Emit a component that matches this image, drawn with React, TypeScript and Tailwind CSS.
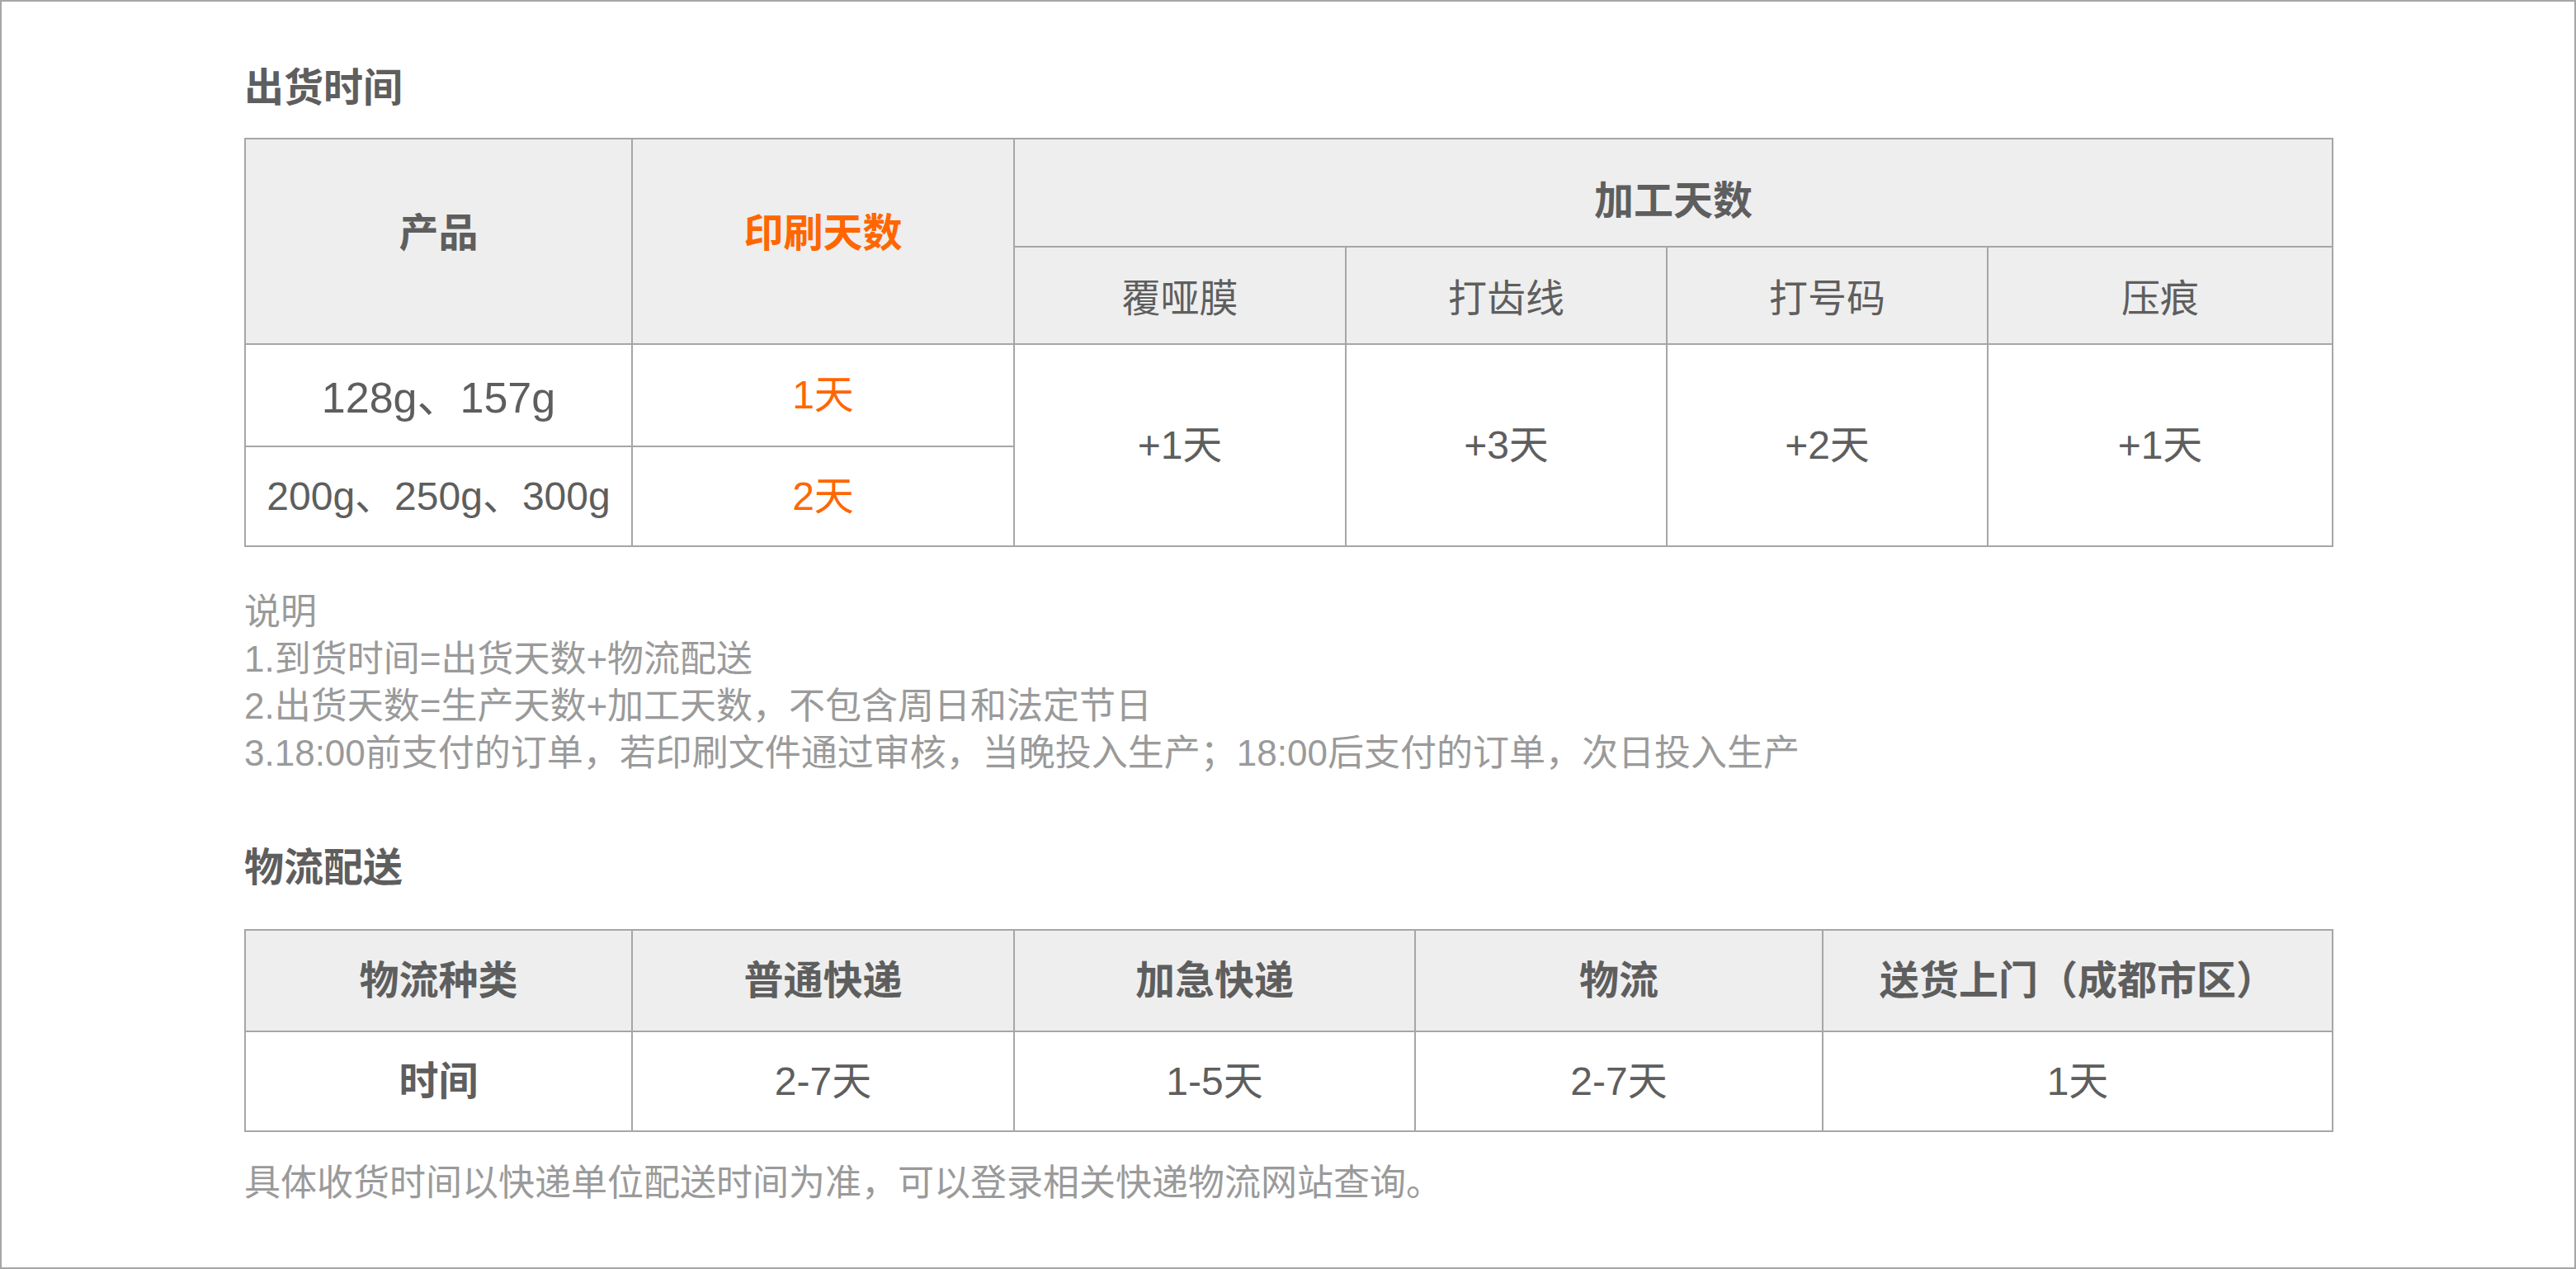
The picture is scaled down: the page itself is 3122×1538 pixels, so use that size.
import React from "react";

const font = { fontFamily: '"Liberation Sans", "Noto Sans CJK SC", sans-serif' };

const processCols = [
    { name: "覆哑膜", days: "+1天", w: "w-[402px]" },
    { name: "打齿线", days: "+3天", w: "w-[389px]" },
    { name: "打号码", days: "+2天", w: "w-[389px]" },
    { name: "压痕", days: "+1天", w: "w-[418px]" },
];

const notes = [
    "说明",
    "1.到货时间=出货天数+物流配送",
    "2.出货天数=生产天数+加工天数，不包含周日和法定节日",
    "3.18:00前支付的订单，若印刷文件通过审核，当晚投入生产；18:00后支付的订单，次日投入生产",
];

const shipping = [
    { name: "普通快递", time: "2-7天", w: "w-[463px]" },
    { name: "加急快递", time: "1-5天", w: "w-[486px]" },
    { name: "物流", time: "2-7天", w: "w-[494px]" },
    { name: "送货上门（成都市区）", time: "1天", w: "w-[618px]" },
];

const cell = "border-2 border-[#a6a6a6] text-center align-middle p-0";

const App = () => {
    return (
        <div className="w-[3122px] h-[1538px] bg-white border-2 border-[#a6a6a6] px-[294px] pt-[81px] text-[#5e5e5e]" style={font}>

            {/* 出货时间 */}
            <h2 className="text-[48px] leading-[48px] font-bold">出货时间</h2>
            <table className="mt-[36px] w-[2530px] table-fixed border-collapse">
                <colgroup>
                    <col className="w-[469px]" />
                    <col className="w-[463px]" />
                    {processCols.map((c) => (
                        <col key={c.name} className={c.w} />
                    ))}
                </colgroup>
                <thead>
                    <tr className="h-[131px] bg-[#eeeeee]">
                        <th rowSpan={2} className={cell + " pb-[20px] text-[48px] font-bold"}>产品</th>
                        <th rowSpan={2} className={cell + " pb-[20px] text-[48px] font-bold text-[#ff6600]"}>印刷天数</th>
                        <th colSpan={4} className={cell + " pt-[20px] text-[48px] font-bold"}>加工天数</th>
                    </tr>
                    <tr className="h-[118px] bg-[#eeeeee]">
                        {processCols.map((c) => (
                            <th key={c.name} className={cell + " pt-[8px] text-[47px] font-normal"}>{c.name}</th>
                        ))}
                    </tr>
                </thead>
                <tbody className="text-[48px]">
                    <tr className="h-[124px]">
                        <td className={cell + " pt-[6px] text-[52px]"}>128g、157g</td>
                        <td className={cell + " text-[#ff6600]"}>1天</td>
                        {processCols.map((c, i) => (
                            <td key={i} rowSpan={2} className={cell}>{c.days}</td>
                        ))}
                    </tr>
                    <tr className="h-[121px]">
                        <td className={cell}>200g、250g、300g</td>
                        <td className={cell + " text-[#ff6600]"}>2天</td>
                    </tr>
                </tbody>
            </table>

            {/* 说明 */}
            <div className="mt-[50px] flex flex-col text-[44px] leading-[57px] text-[#9a9a9a]">
                {notes.map((n) => (
                    <p key={n}>{n}</p>
                ))}
            </div>

            {/* 物流配送 */}
            <h2 className="mt-[87px] text-[48px] leading-[48px] font-bold">物流配送</h2>
            <table className="mt-[50px] w-[2530px] table-fixed border-collapse">
                <colgroup>
                    <col className="w-[469px]" />
                    {shipping.map((s) => (
                        <col key={s.name} className={s.w} />
                    ))}
                </colgroup>
                <thead>
                    <tr className="h-[123px] bg-[#eeeeee]">
                        <th className={cell + " text-[48px] font-bold"}>物流种类</th>
                        {shipping.map((s) => (
                            <th key={s.name} className={cell + " text-[48px] font-bold"}>{s.name}</th>
                        ))}
                    </tr>
                </thead>
                <tbody className="text-[48px]">
                    <tr className="h-[121px]">
                        <td className={cell + " font-bold"}>时间</td>
                        {shipping.map((s) => (
                            <td key={s.name} className={cell}>{s.time}</td>
                        ))}
                    </tr>
                </tbody>
            </table>

            <p className="mt-[33px] text-[44px] leading-[57px] text-[#9a9a9a]">
                具体收货时间以快递单位配送时间为准，可以登录相关快递物流网站查询。
            </p>
        </div>
    );
};

export default App;
